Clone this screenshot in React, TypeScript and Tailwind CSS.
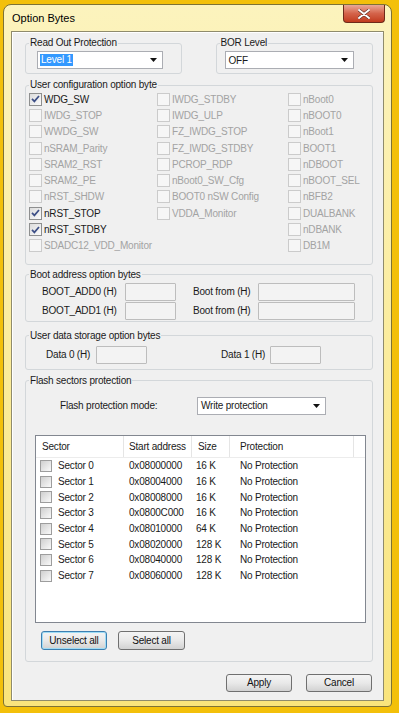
import clsx from 'clsx';
import type { ReactNode } from 'react';

type Opt = { label: string; checked?: boolean; enabled?: boolean };

const col1: Opt[] = [
  { label: 'WDG_SW', checked: true, enabled: true },
  { label: 'IWDG_STOP' },
  { label: 'WWDG_SW' },
  { label: 'nSRAM_Parity' },
  { label: 'SRAM2_RST' },
  { label: 'SRAM2_PE' },
  { label: 'nRST_SHDW' },
  { label: 'nRST_STOP', checked: true, enabled: true },
  { label: 'nRST_STDBY', checked: true, enabled: true },
  { label: 'SDADC12_VDD_Monitor' },
];

const col2: Opt[] = [
  { label: 'IWDG_STDBY' },
  { label: 'IWDG_ULP' },
  { label: 'FZ_IWDG_STOP' },
  { label: 'FZ_IWDG_STDBY' },
  { label: 'PCROP_RDP' },
  { label: 'nBoot0_SW_Cfg' },
  { label: 'BOOT0 nSW Config' },
  { label: 'VDDA_Monitor' },
];

const col3: Opt[] = [
  { label: 'nBoot0' },
  { label: 'nBOOT0' },
  { label: 'nBoot1' },
  { label: 'BOOT1' },
  { label: 'nDBOOT' },
  { label: 'nBOOT_SEL' },
  { label: 'nBFB2' },
  { label: 'DUALBANK' },
  { label: 'nDBANK' },
  { label: 'DB1M' },
];

const sectors = [
  ['Sector 0', '0x08000000', '16 K'],
  ['Sector 1', '0x08004000', '16 K'],
  ['Sector 2', '0x08008000', '16 K'],
  ['Sector 3', '0x0800C000', '16 K'],
  ['Sector 4', '0x08010000', '64 K'],
  ['Sector 5', '0x08020000', '128 K'],
  ['Sector 6', '0x08040000', '128 K'],
  ['Sector 7', '0x08060000', '128 K'],
];

function CheckBox({ checked, enabled }: { checked?: boolean; enabled?: boolean }) {
  return (
    <span
      className={clsx(
        'flex h-[13px] w-[13px] shrink-0 items-center justify-center border',
        enabled
          ? 'border-[#8e8f8f] bg-linear-to-br from-[#dcdcdc] to-[#fbfbfb]'
          : 'border-[#cbcbcb] bg-[#f6f6f6]'
      )}
    >
      {checked && (
        <svg width="9" height="8" viewBox="0 0 9 8">
          <path d="M1 3.8l2.4 2.6L8 1" stroke="#3d4f86" strokeWidth="1.7" fill="none" />
        </svg>
      )}
    </span>
  );
}

function Group({ title, className, children }: { title: string; className?: string; children: ReactNode }) {
  return (
    <fieldset className={clsx('rounded-[3px] border border-[#d3d7da]', className)}>
      <legend className="ml-[3px] px-[1px] leading-[12px]">{title}</legend>
      {children}
    </fieldset>
  );
}

function Arrow() {
  return (
    <svg width="7" height="4" viewBox="0 0 7 4">
      <path d="M0 0h7L3.5 4z" fill="#111" />
    </svg>
  );
}

function Combo({ className, children }: { className?: string; children: ReactNode }) {
  return (
    <div className={clsx('flex h-[18px] items-center justify-between border border-[#abadb3] bg-white pl-[2px] pr-[5px]', className)}>
      {children}
      <Arrow />
    </div>
  );
}

function Field({ className }: { className?: string }) {
  return <div className={clsx('h-[18px] rounded-[1px] border border-[#bdbdbd] bg-[#f3f3f3]', className)} />;
}

function Button({ label, focused, className }: { label: string; focused?: boolean; className?: string }) {
  return (
    <div
      className={clsx(
        'flex items-center justify-center rounded-[3px] border bg-linear-to-b from-[#f4f4f4] via-[#e9e9e9] to-[#d2d2d2] text-[#111]',
        focused ? 'border-[#3c7fb1] shadow-[inset_0_0_0_1px_#9fdcf5]' : 'border-[#707070]',
        className
      )}
    >
      {label}
    </div>
  );
}

function OptColumn({ items, className }: { items: Opt[]; className?: string }) {
  return (
    <div className={clsx('flex flex-col', className)}>
      {items.map((o) => (
        <div key={o.label} className="flex h-[16.3px] items-center gap-[2px]">
          <CheckBox checked={o.checked} enabled={o.enabled} />
          <span className={o.enabled ? 'text-[#1a1a1a]' : 'text-[#a3a3a3]'}>{o.label}</span>
        </div>
      ))}
    </div>
  );
}

export default function App() {
  return (
    <div className="h-[713px] w-[399px] overflow-hidden bg-[#f3c00a] pt-[4px] pb-[6px] pl-[3px] pr-[7px] font-['Liberation_Sans',Arial,sans-serif] text-[10px] tracking-[-0.2px] text-[#1a1a1a]">
      <div className="flex h-full flex-col rounded-t-[8px] rounded-b-[4px] border border-[#7d7236] bg-linear-to-b from-[#fcf3bd] via-[#fbec9c] to-[#f9e47c] px-[7px] pb-[5px]">
        {/* title bar */}
        <div className="flex h-[26px] items-start justify-between">
          <span className="pl-[1px] pt-[7px] text-[11px] leading-[13px] tracking-normal text-black">Option Bytes</span>
          <div className="mr-[-1px] flex h-[18px] w-[42px] items-center justify-center rounded-b-[4px] border border-t-0 border-[#6e2a1a] bg-linear-to-b from-[#e9a897] via-[#d4634a] to-[#c23a1c]">
            <svg width="12" height="10" viewBox="0 0 12 10">
              <path d="M1 1l10 8M11 1L1 9" stroke="#5a2a20" strokeWidth="3.2" strokeLinecap="round" />
              <path d="M1 1l10 8M11 1L1 9" stroke="#fff" strokeWidth="2" strokeLinecap="round" />
            </svg>
          </div>
        </div>

        {/* client area */}
        <div className="flex flex-1 flex-col border border-[#8f8b6c] bg-[#f0f0f0] pl-[13px] pr-[10px] pt-[5px] shadow-[inset_1px_1px_0_#ffffff]">
          <div className="flex">
            <Group title="Read Out Protection" className="w-[158px]">
              <div className="pl-[11px] pt-[2px] pb-[4px]">
                <Combo className="w-[126px]">
                  <span className="bg-[#3399ff] px-[1px] leading-[12px] text-white">Level 1</span>
                </Combo>
              </div>
            </Group>
            <Group title="BOR Level" className="ml-[34px] w-[159px]">
              <div className="pl-[8px] pt-[2px] pb-[4px]">
                <Combo className="w-[129px]">
                  <span className="pl-[1px]">OFF</span>
                </Combo>
              </div>
            </Group>
          </div>

          <Group title="User configuration option byte" className="mt-[5px]">
            <div className="flex pl-[3px] pb-[10px]">
              <OptColumn items={col1} className="w-[128px]" />
              <OptColumn items={col2} className="w-[131px]" />
              <OptColumn items={col3} />
            </div>
          </Group>

          <Group title="Boot address option bytes" className="mt-[4px]">
            <div className="flex flex-col gap-[1px] pl-[16px] pt-[2px] pb-[1px]">
              {['BOOT_ADD0 (H)', 'BOOT_ADD1 (H)'].map((l) => (
                <div key={l} className="flex items-center">
                  <span className="w-[83px]">{l}</span>
                  <Field className="w-[51px]" />
                  <span className="ml-[17px] w-[65px]">Boot from (H)</span>
                  <Field className="w-[97px]" />
                </div>
              ))}
            </div>
          </Group>

          <Group title="User data storage option bytes" className="mt-[8px]">
            <div className="flex items-center pl-[20px] pt-[4px] pb-[5px]">
              <span className="w-[50px]">Data 0 (H)</span>
              <Field className="h-[17px] w-[51px]" />
              <span className="ml-[74px] w-[49px]">Data 1 (H)</span>
              <Field className="h-[17px] w-[51px]" />
            </div>
          </Group>

          <Group title="Flash sectors protection" className="mt-[5px]">
            <div className="flex flex-col pb-[11px]">
              <div className="mt-[10px] flex items-center pl-[34px]">
                <span className="w-[137px]">Flash protection mode:</span>
                <Combo className="h-[17px] w-[129px]">
                  <span className="pl-[1px]">Write protection</span>
                </Combo>
              </div>

              <div className="ml-[9px] mt-[20px] h-[188px] w-[331px] border border-[#828790] bg-white">
                <div className="grid h-[22px] grid-cols-[88px_68px_38px_124px_1fr] border-b border-[#ececec]">
                  <span className="flex items-center border-r border-[#e5e5e5] pl-[6px]">Sector</span>
                  <span className="flex items-center border-r border-[#e5e5e5] pl-[5px]">Start address</span>
                  <span className="flex items-center border-r border-[#e5e5e5] pl-[6px]">Size</span>
                  <span className="flex items-center border-r border-[#e5e5e5] pl-[10px]">Protection</span>
                  <span />
                </div>
                {sectors.map(([name, addr, size]) => (
                  <div key={name} className="grid h-[15.7px] grid-cols-[88px_68px_38px_124px_1fr] items-center">
                    <span className="flex items-center gap-[6px] pl-[4px]">
                      <span className="h-[12px] w-[12px] border border-[#9d9d9d] bg-linear-to-br from-[#cfcfcf] to-[#fafafa]" />
                      {name}
                    </span>
                    <span className="pl-[5px]">{addr}</span>
                    <span className="pl-[4px]">{size}</span>
                    <span className="pl-[10px]">No Protection</span>
                    <span />
                  </div>
                ))}
              </div>

              <div className="ml-[15px] mt-[8px] flex gap-[11px]">
                <Button label="Unselect all" focused className="h-[19px] w-[66px]" />
                <Button label="Select all" className="h-[19px] w-[67px]" />
              </div>
            </div>
          </Group>

          <div className="mt-[12px] flex justify-end gap-[14px] pr-[1px]">
            <Button label="Apply" className="h-[18px] w-[66px]" />
            <Button label="Cancel" className="h-[18px] w-[66px]" />
          </div>
        </div>
      </div>
    </div>
  );
}
